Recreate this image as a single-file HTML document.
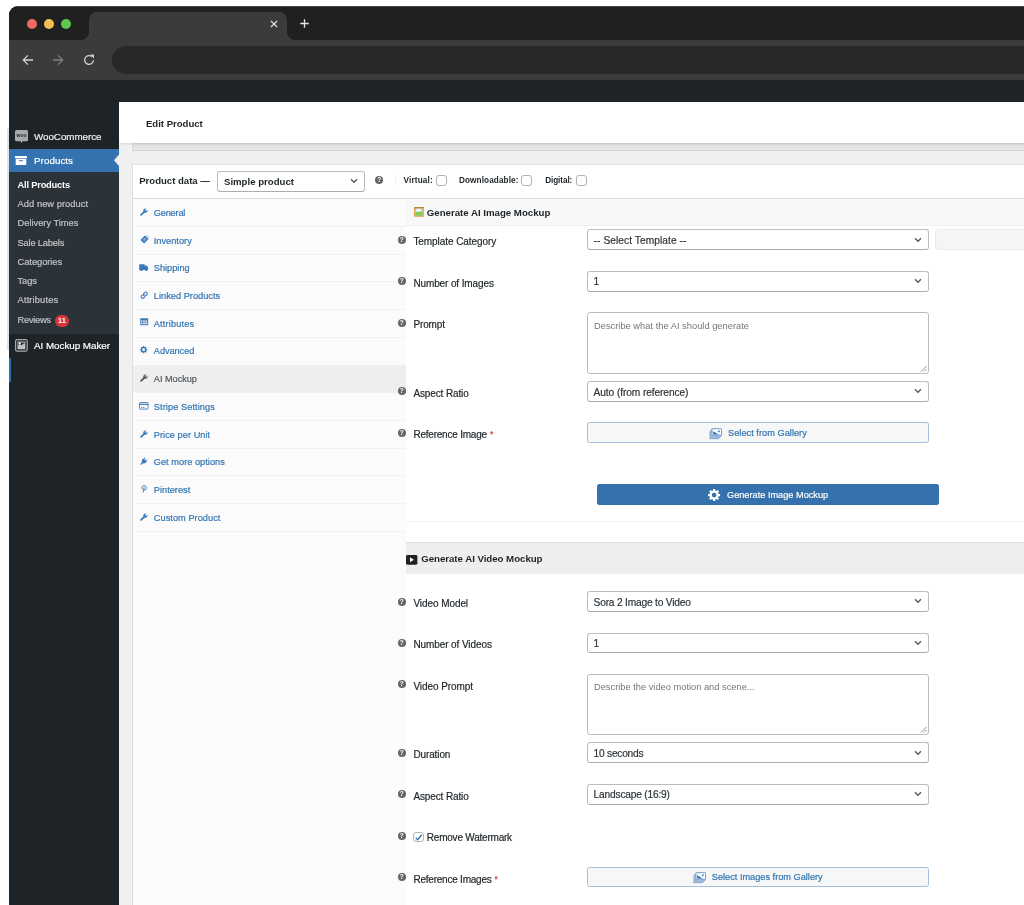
<!DOCTYPE html>
<html lang="en">
<head>
<meta charset="utf-8">
<title>Edit Product</title>
<style>
*{box-sizing:border-box;margin:0;padding:0}
html,body{width:1024px;height:905px;overflow:hidden;background:#fff}
body{font-family:"Liberation Sans",Arial,sans-serif;color:#1d2327;position:relative;font-size:10px}
#win{position:absolute;left:9px;top:6px;width:1100px;height:960px;background:#1d2327;border-top-left-radius:9px;overflow:hidden}
#pg{position:absolute;left:-9px;top:-6px;width:1024px;height:905px;will-change:transform}
#pg>*{position:absolute}
.bx{position:absolute}
.tx{white-space:nowrap;transform:translateY(-50%);line-height:1.2;-webkit-text-stroke:0.18px}
.sel{-webkit-text-stroke:0.18px}
.ic{position:absolute;overflow:visible}
.dot{width:10.6px;height:10.6px;border-radius:50%}
#tab{left:89px;top:12px;width:198px;height:28px;background:#3b3b3c;border-radius:8px 8px 0 0}
#tab:before,#tab:after{content:"";position:absolute;bottom:0;width:8px;height:8px}
#tab:before{left:-8px;background:radial-gradient(circle at 0 0,transparent 7.6px,#3b3b3c 8.2px)}
#tab:after{right:-8px;background:radial-gradient(circle at 100% 0,transparent 7.6px,#3b3b3c 8.2px)}
.mi{color:#f0f0f1;font-size:9.8px}
.sm{color:#c3c4c7;font-size:9.4px}
.sel{border:1px solid #bbbdc0;border-bottom-color:#abadb1;border-radius:3px;background:#fff;font-size:10.2px;padding-left:5.6px;padding-top:1.4px;color:#2c3338;white-space:nowrap}
.chev{position:absolute;right:5.5px;top:50%;margin-top:-3px}
.cb{width:11px;height:11px;border:1px solid #b0b2b6;border-radius:3px;background:#fff}
.hl{font-size:8.4px;font-weight:bold;color:#1d2327}
.tb{color:#3074b2;font-size:9.3px}
.sep{left:133.3px;width:272.9px;height:1px;background:#f1f1f1}
.lab{font-size:10px;color:#1d2327}
.tip{width:8px;height:8px;border-radius:50%;background:#666;color:#fff;font-size:6.5px;font-weight:bold;line-height:8.4px;text-align:center}
.ta{border:1px solid #bbbdc0;border-radius:3px;background:#fff;font-size:9.3px;color:#72777c;padding:6.5px 6px;line-height:12px;white-space:nowrap}
.rz{position:absolute;right:1px;bottom:1px}
.gbtn{border:1px solid #a3bfdd;border-radius:2.5px;background:#f6f7f7}
.pbtn{border-radius:2.5px;background:#3571ad}
.req{color:#d63638}
.hd{font-weight:bold;font-size:9.7px;color:#1d2327}
</style>
</head>
<body>
<div id="win"><div id="pg">
<div style="left:9px;top:6px;width:1015px;height:34px;background:#202021;border-top:1px solid #454546"></div>
<div style="left:9px;top:40px;width:1015px;height:40px;background:#3b3b3c"></div>
<div class="dot" style="left:26.8px;top:18.7px;background:#ed6a5e"></div>
<div class="dot" style="left:43.8px;top:18.7px;background:#f5bf4f"></div>
<div class="dot" style="left:60.8px;top:18.7px;background:#61c554"></div>
<div id="tab"></div>
<svg style="left:269.6px;top:19.6px" width="8" height="8" viewBox="0 0 9 9"><path d="M1 1L8 8M8 1L1 8" stroke="#e3e5e8" stroke-width="1.5" fill="none"/></svg>
<svg style="left:299.5px;top:19.2px" width="9" height="9" viewBox="0 0 10 10"><path d="M5 0.3V9.7M0.3 5H9.7" stroke="#e3e5e8" stroke-width="1.5" fill="none"/></svg>
<svg style="left:22px;top:54px" width="12" height="12" viewBox="0 0 12 12"><path d="M11 6H1.6M5.9 1.4L1.3 6L5.9 10.6" stroke="#d0d2d5" stroke-width="1.3" fill="none"/></svg>
<svg style="left:52px;top:54px" width="12" height="12" viewBox="0 0 12 12"><path d="M1 6H10.4M6.1 1.4L10.7 6L6.1 10.6" stroke="#7d7f82" stroke-width="1.3" fill="none"/></svg>
<svg style="left:83px;top:54px" width="12" height="12" viewBox="0 0 12 12"><path d="M10.4 6.2A4.4 4.4 0 1 1 8.8 2.6" stroke="#d0d2d5" stroke-width="1.3" fill="none"/><path d="M7.2 0.6H11V4.4Z" fill="#d0d2d5"/></svg>
<div style="left:112px;top:46px;width:1000px;height:28px;border-radius:14px;background:#282829"></div>
<div style="left:9px;top:80px;width:110px;height:830px;background:#1d2327"></div>
<svg style="left:14.8px;top:130px" width="13.2" height="13.2" viewBox="0 0 26 26"><path d="M3 0H23A3 3 0 0 1 26 3V19A3 3 0 0 1 23 22H15L12.5 25.5 11 22H3A3 3 0 0 1 0 19V3A3 3 0 0 1 3 0Z" fill="#a7aaad"/><text x="13" y="14.6" font-family="Liberation Sans, sans-serif" font-weight="bold" font-size="10" text-anchor="middle" fill="#1d2327">woo</text></svg>
<div class="tx mi" style="left:34px;top:137.3px;font-size:9.8px;letter-spacing:-0.039px;">WooCommerce</div>
<div style="left:9px;top:148.5px;width:110px;height:23.5px;background:#3572b0"></div>
<svg style="left:113.5px;top:154px" width="5.5" height="12.5" viewBox="0 0 5.5 12.5"><path d="M5.5 0V12.5L0 6.25Z" fill="#f0f0f1"/></svg>
<svg style="left:15.3px;top:155.6px" width="12" height="9.6" viewBox="0 0 24 19" fill="#fff"><rect x="0" y="0" width="24" height="4.2"/><path d="M1.4 5.6H22.6V19H1.4ZM8 8.2V10.4H16V8.2Z" fill-rule="evenodd"/></svg>
<div class="tx mi" style="left:34px;top:160.6px;color:#fff;font-size:9.8px;letter-spacing:0.047px;">Products</div>
<div style="left:9px;top:172px;width:110px;height:162px;background:#2c3338"></div>
<div class="tx sm" style="left:17.6px;top:185.6px;color:#fff;font-size:9.3px;font-weight:bold;-webkit-text-stroke:0;letter-spacing:-0.207px;">All Products</div>
<div class="tx sm" style="left:17.6px;top:205px;font-size:9.3px;letter-spacing:0.050px;">Add new product</div>
<div class="tx sm" style="left:17.6px;top:224.2px;font-size:9.3px;letter-spacing:-0.017px;">Delivery Times</div>
<div class="tx sm" style="left:17.6px;top:243.5px;font-size:9.3px;letter-spacing:-0.185px;">Sale Labels</div>
<div class="tx sm" style="left:17.6px;top:262.7px;font-size:9.3px;letter-spacing:-0.053px;">Categories</div>
<div class="tx sm" style="left:17.6px;top:282px;font-size:9.3px;letter-spacing:-0.132px;">Tags</div>
<div class="tx sm" style="left:17.6px;top:301.2px;font-size:9.3px;letter-spacing:0.135px;">Attributes</div>
<div class="tx sm" style="left:17.6px;top:320.6px;font-size:9.3px;letter-spacing:-0.291px;">Reviews</div>
<div style="left:55px;top:315px;width:14px;height:12.4px;border-radius:6.2px;background:#d63638;color:#fff;font-size:7.4px;font-weight:bold;text-align:center;line-height:12.6px">11</div>
<svg style="left:15px;top:339.3px" width="12.8" height="12.8" viewBox="0 0 26 26"><rect x="1.2" y="1.2" width="23.6" height="23.6" rx="3" fill="none" stroke="#a7aaad" stroke-width="2.4"/><path d="M5 5H21V21H5ZM7 7V13L10.5 9.5 13.5 13 17.5 8.5 19 10V7Z" fill="#c3c4c7" fill-rule="evenodd"/><rect x="8" y="7" width="4" height="3.4" fill="#f0f0f1"/></svg>
<div class="tx mi" style="left:34px;top:345.7px;color:#fff;font-size:9.8px;letter-spacing:-0.018px;">AI Mockup Maker</div>
<div style="left:8.5px;top:358px;width:2px;height:24px;background:#2f6fb0"></div>
<div style="left:118.5px;top:102px;width:910px;height:810px;background:#f0f0f1"></div>
<div style="left:132px;top:143px;width:900px;height:7.5px;background:linear-gradient(#dadbdd,#e8e9ea);border-bottom:1px solid #d0d1d4;border-left:1px solid #d6d7da"></div>
<div style="left:118.5px;top:102px;width:910px;height:41.3px;background:#fff;box-shadow:0 1px 2px rgba(0,0,0,.10)"></div>
<div class="tx " style="left:146px;top:124px;color:#1d2327;font-size:9.6px;font-weight:bold;-webkit-text-stroke:0;letter-spacing:-0.029px;">Edit Product</div>
<div style="left:132.3px;top:163.6px;width:900px;height:760px;background:#fff;border:1px solid #dddee0"></div>
<div style="left:133.3px;top:198px;width:900px;height:1px;background:#dcdcde"></div>
<div class="tx " style="left:139.2px;top:181.2px;font-size:9.6px;font-weight:bold;-webkit-text-stroke:0;letter-spacing:-0.015px;">Product data —</div>
<div class="sel " style="left:217px;top:171px;width:147.5px;height:20.8px;line-height:18.8px;font-size:9.6px;letter-spacing:0.010px;font-weight:bold;color:#1d2327;padding-left:6px;-webkit-text-stroke:0;">Simple product<svg class="chev" width="8" height="6" viewBox="0 0 8 6"><path d="M1 1.2L4 4.3L7 1.2" stroke="#50575e" stroke-width="1.3" fill="none"/></svg></div>
<div class="tip" style="left:375.2px;top:175.6px">?</div>
<div style="left:394.8px;top:175px;width:1px;height:10px;background:#efefef"></div>
<div class="tx hl" style="left:403.6px;top:181.4px;font-size:8.2px;font-weight:bold;-webkit-text-stroke:0;letter-spacing:0.143px;">Virtual:</div>
<div class="cb" style="left:435.6px;top:174.8px"></div>
<div class="tx hl" style="left:459px;top:181.4px;font-size:8.2px;font-weight:bold;-webkit-text-stroke:0;letter-spacing:0.099px;">Downloadable:</div>
<div class="cb" style="left:521px;top:174.8px"></div>
<div class="tx hl" style="left:545.2px;top:181.4px;font-size:8.2px;font-weight:bold;-webkit-text-stroke:0;letter-spacing:-0.084px;">Digital:</div>
<div class="cb" style="left:575.6px;top:174.8px"></div>
<div style="left:133.3px;top:199px;width:272.9px;height:720px;background:#fbfbfb"></div>
<div class="sep" style="top:225.9px"></div>
<svg class="ic" style="left:139.8px;top:207.8px" width="8" height="8" viewBox="0 0 12 12" fill="#3d7ab7"><path d="M9.6 0.9 7.6 2.9 8.1 3.9 9.1 4.4 11.1 2.4C11.6 3.9 11.2 5.4 10.1 6.3 9.2 7.1 8 7.3 6.9 7L2.6 11.3C2.1 11.8 1.2 11.8 0.7 11.3 0.2 10.8 0.2 9.9 0.7 9.4L5 5.1C4.7 4 4.9 2.8 5.7 1.9 6.6 0.8 8.2 0.4 9.6 0.9Z"/></svg>
<div class="tx tb" style="left:153.8px;top:213.8px;font-size:9.2px;letter-spacing:-0.188px;">General</div>
<div class="sep" style="top:253.6px"></div>
<svg class="ic" style="left:139.8px;top:234.5px" width="9" height="9" viewBox="0 0 12 12" fill="#3d7ab7"><path d="M6.6 0.6 11.4 5.4 5.6 11.4 0.6 6.6Z"/><path d="M8.2 0.4l1.2-0.2 2.4 2.4-0.2 1.2z" opacity=".7"/><path d="M3.3 6.3 6.3 3.3 8.8 5.8 5.8 8.8Z" fill="#fafafa" opacity=".35"/></svg>
<div class="tx tb" style="left:153.8px;top:241.5px;font-size:9.2px;letter-spacing:0.020px;">Inventory</div>
<div class="sep" style="top:281.4px"></div>
<svg class="ic" style="left:139.20000000000002px;top:263.9px" width="9.4" height="7.4" viewBox="0 0 19 15" fill="#3d7ab7"><path d="M0.5 0.5H11.5V3H15.5L18.5 7V12H17A2.4 2.4 0 0 1 12.3 12H7.2A2.4 2.4 0 0 1 2.5 12H0.5Z"/><circle cx="4.8" cy="12.3" r="1.9"/><circle cx="14.6" cy="12.3" r="1.9"/></svg>
<div class="tx tb" style="left:153.8px;top:269.2px;font-size:9.2px;letter-spacing:0.013px;">Shipping</div>
<div class="sep" style="top:309.1px"></div>
<svg class="ic" style="left:139.8px;top:291.0px" width="8.4" height="8.4" viewBox="0 0 12 12" fill="none" stroke="#3d7ab7" stroke-width="1.55" stroke-linecap="round"><path d="M5.2 6.8A2.3 2.3 0 0 1 5.2 3.6L6.8 2A2.3 2.3 0 0 1 10 5.2L9 6.2"/><path d="M6.8 5.2A2.3 2.3 0 0 1 6.8 8.4L5.2 10A2.3 2.3 0 0 1 2 6.8L3 5.8"/></svg>
<div class="tx tb" style="left:153.8px;top:297.0px;font-size:9.2px;letter-spacing:0.031px;">Linked Products</div>
<div class="sep" style="top:336.8px"></div>
<svg class="ic" style="left:139.9px;top:318.3px" width="8.4" height="7.4" viewBox="0 0 17 15" fill="#3d7ab7"><path d="M0.5 0.5H16.5V14.5H0.5ZM2.5 5V12.5H14.5V5Z" fill-rule="evenodd"/><rect x="3.8" y="6.4" width="3.4" height="4.8"/><rect x="8.6" y="6.4" width="4.8" height="1.3"/><rect x="8.6" y="8.6" width="4.8" height="1.3"/><rect x="8.6" y="10.6" width="3" height="0.9"/></svg>
<div class="tx tb" style="left:153.8px;top:324.7px;font-size:9.2px;letter-spacing:0.171px;">Attributes</div>
<div class="sep" style="top:364.5px"></div>
<svg class="ic" style="left:139.9px;top:346.2px" width="7.3" height="7.3" viewBox="0 0 12 12" fill="#3d7ab7" fill-rule="evenodd"><path d="M4.80 1.66 L4.98 0.09 L7.02 0.09 L7.20 1.66 L8.22 2.08 L9.46 1.10 L10.90 2.54 L9.92 3.78 L10.34 4.80 L11.91 4.98 L11.91 7.02 L10.34 7.20 L9.92 8.22 L10.90 9.46 L9.46 10.90 L8.22 9.92 L7.20 10.34 L7.02 11.91 L4.98 11.91 L4.80 10.34 L3.78 9.92 L2.54 10.90 L1.10 9.46 L2.08 8.22 L1.66 7.20 L0.09 7.02 L0.09 4.98 L1.66 4.80 L2.08 3.78 L1.10 2.54 L2.54 1.10 L3.78 2.08Z M6 3.7A2.3 2.3 0 1 0 6 8.3A2.3 2.3 0 1 0 6 3.7Z"/></svg>
<div class="tx tb" style="left:153.8px;top:352.4px;font-size:9.2px;letter-spacing:-0.046px;">Advanced</div>
<div style="left:133.3px;top:365.5px;width:272.9px;height:27.7px;background:#eee"></div>
<div class="sep" style="top:392.2px"></div>
<svg class="ic" style="left:139.8px;top:374.1px" width="8" height="8" viewBox="0 0 12 12" fill="#555"><path d="M9.6 0.9 7.6 2.9 8.1 3.9 9.1 4.4 11.1 2.4C11.6 3.9 11.2 5.4 10.1 6.3 9.2 7.1 8 7.3 6.9 7L2.6 11.3C2.1 11.8 1.2 11.8 0.7 11.3 0.2 10.8 0.2 9.9 0.7 9.4L5 5.1C4.7 4 4.9 2.8 5.7 1.9 6.6 0.8 8.2 0.4 9.6 0.9Z"/></svg>
<div class="tx tb" style="left:153.8px;top:380.1px;color:#50575e;font-size:9.2px;letter-spacing:-0.033px;">AI Mockup</div>
<div class="sep" style="top:420.0px"></div>
<svg class="ic" style="left:139.0px;top:402.40000000000003px" width="9.6" height="7.6" viewBox="0 0 19 15" fill="none" stroke="#3d7ab7"><rect x="1" y="1" width="17" height="13" rx="1.5" stroke-width="1.7"/><path d="M1 4.6H18" stroke-width="2.4"/><path d="M3.8 10.8H6.4M8 10.8H11" stroke-width="1.6"/></svg>
<div class="tx tb" style="left:153.8px;top:407.8px;font-size:9.2px;letter-spacing:0.091px;">Stripe Settings</div>
<div class="sep" style="top:447.7px"></div>
<svg class="ic" style="left:139.8px;top:429.6px" width="8" height="8" viewBox="0 0 12 12" fill="#3d7ab7"><path d="M9.6 0.9 7.6 2.9 8.1 3.9 9.1 4.4 11.1 2.4C11.6 3.9 11.2 5.4 10.1 6.3 9.2 7.1 8 7.3 6.9 7L2.6 11.3C2.1 11.8 1.2 11.8 0.7 11.3 0.2 10.8 0.2 9.9 0.7 9.4L5 5.1C4.7 4 4.9 2.8 5.7 1.9 6.6 0.8 8.2 0.4 9.6 0.9Z"/></svg>
<div class="tx tb" style="left:153.8px;top:435.6px;font-size:9.2px;letter-spacing:0.052px;">Price per Unit</div>
<div class="sep" style="top:475.4px"></div>
<svg class="ic" style="left:139.8px;top:457.3px" width="8" height="8" viewBox="0 0 12 12" fill="#3d7ab7"><path d="M7.3 0.6 8.3 1.6 6.6 3.5 8.4 5.3 10.3 3.6 11.3 4.6 9.4 6.5 9.9 7 C8.6 9.3 6.3 10.1 4 9.3L2 11.5 0.6 11.6 0.7 10 2.8 8C2 5.8 2.8 3.5 5 2.1L5.6 2.6Z"/></svg>
<div class="tx tb" style="left:153.8px;top:463.3px;font-size:9.2px;letter-spacing:0.035px;">Get more options</div>
<div class="sep" style="top:503.1px"></div>
<svg class="ic" style="left:140.8px;top:484.8px" width="6.2" height="8" viewBox="0 0 10 13" fill="none" stroke="#3d7ab7" stroke-linecap="round"><path d="M1.6 6.6C0.2 4 1.6 1 5 1 8 1 9.2 3 9 5 8.8 7.2 7.4 8.6 5.8 8.2 4.8 8 4.6 7 4.8 6.2" stroke-width="1.4"/><path d="M5.2 3.8 3.4 11.8" stroke-width="1.5"/></svg>
<div class="tx tb" style="left:153.8px;top:491.0px;font-size:9.2px;letter-spacing:0.024px;">Pinterest</div>
<div class="sep" style="top:530.8px"></div>
<svg class="ic" style="left:139.8px;top:512.7px" width="8" height="8" viewBox="0 0 12 12" fill="#3d7ab7"><path d="M9.6 0.9 7.6 2.9 8.1 3.9 9.1 4.4 11.1 2.4C11.6 3.9 11.2 5.4 10.1 6.3 9.2 7.1 8 7.3 6.9 7L2.6 11.3C2.1 11.8 1.2 11.8 0.7 11.3 0.2 10.8 0.2 9.9 0.7 9.4L5 5.1C4.7 4 4.9 2.8 5.7 1.9 6.6 0.8 8.2 0.4 9.6 0.9Z"/></svg>
<div class="tx tb" style="left:153.8px;top:518.7px;font-size:9.2px;letter-spacing:0.057px;">Custom Product</div>
<div style="left:406.2px;top:199px;width:620px;height:27px;background:#f8f8f8;border-bottom:1px solid #f0f0f0"></div>
<svg style="left:414.3px;top:207.4px" width="9.9" height="9.9" viewBox="0 0 20 20"><rect x="0.3" y="0.3" width="19.4" height="19.4" rx="0.8" fill="#dc9a32"/><rect x="0.3" y="0.3" width="19.4" height="2.4" fill="#b87a26"/><rect x="2.8" y="3" width="14.4" height="14.2" fill="#cfe4f5"/><path d="M2.8 10.8C6 8.8 9 11.4 12 9.8 14 8.8 16 9.2 17.2 10V17.2H2.8Z" fill="#82cf4d"/><ellipse cx="9.4" cy="6.4" rx="4.4" ry="1.9" fill="#fff"/></svg>
<div class="tx hd" style="left:426.8px;top:212.6px;font-size:9.7px;font-weight:bold;-webkit-text-stroke:0;letter-spacing:-0.020px;">Generate AI Image Mockup</div>
<div class="tip" style="left:397.7px;top:236.2px">?</div>
<div class="tx lab" style="left:413.4px;top:242.29999999999998px;font-size:10px;letter-spacing:-0.064px;">Template Category</div>
<div class="tip" style="left:397.7px;top:277.0px">?</div>
<div class="tx lab" style="left:413.4px;top:283.6px;font-size:10px;letter-spacing:-0.117px;">Number of Images</div>
<div class="tip" style="left:397.7px;top:318.7px">?</div>
<div class="tx lab" style="left:413.4px;top:324.5px;font-size:10px;letter-spacing:-0.126px;">Prompt</div>
<div class="tip" style="left:397.7px;top:387.3px">?</div>
<div class="tx lab" style="left:413.4px;top:393.90000000000003px;font-size:10px;letter-spacing:-0.118px;">Aspect Ratio</div>
<div class="tip" style="left:397.7px;top:428.5px">?</div>
<div class="tx lab" style="left:413.4px;top:434.8px;font-size:10px;letter-spacing:-0.215px;">Reference Image</div>
<div class="tx lab" style="left:489.9px;top:434.3px;color:#d63638;font-size:8.4px;">*</div>
<div class="tip" style="left:397.7px;top:597.5px">?</div>
<div class="tx lab" style="left:413.4px;top:603.9px;font-size:10px;letter-spacing:-0.071px;">Video Model</div>
<div class="tip" style="left:397.7px;top:639.0px">?</div>
<div class="tx lab" style="left:413.4px;top:645.3000000000001px;font-size:10px;letter-spacing:-0.091px;">Number of Videos</div>
<div class="tip" style="left:397.7px;top:680.0px">?</div>
<div class="tx lab" style="left:413.4px;top:686.5px;font-size:10px;letter-spacing:-0.073px;">Video Prompt</div>
<div class="tip" style="left:397.7px;top:748.8px">?</div>
<div class="tx lab" style="left:413.4px;top:755.3000000000001px;font-size:10px;letter-spacing:-0.114px;">Duration</div>
<div class="tip" style="left:397.7px;top:790.4px">?</div>
<div class="tx lab" style="left:413.4px;top:796.9px;font-size:10px;letter-spacing:-0.118px;">Aspect Ratio</div>
<div class="tip" style="left:397.7px;top:873.2px">?</div>
<div class="tx lab" style="left:413.4px;top:879.85px;font-size:10px;letter-spacing:-0.221px;">Reference Images</div>
<div class="tx lab" style="left:494.59999999999997px;top:879.35px;color:#d63638;font-size:8.4px;">*</div>
<div class="tip" style="left:397.7px;top:831.6px">?</div>
<div class="cb" style="left:413px;top:831.8px;width:10.6px;height:10.6px"><svg class="bx" style="left:0.8px;top:1px" width="7.5" height="7" viewBox="0 0 15 14"><path d="M1.5 7.5L5.5 11.5L13.5 1.5" stroke="#2f72b2" stroke-width="2.6" fill="none"/></svg></div>
<div class="tx lab" style="left:426.8px;top:838.2px;font-size:10px;letter-spacing:-0.216px;">Remove Watermark</div>
<div class="sel " style="left:587px;top:229.4px;width:341.8px;height:20.8px;line-height:18.8px;font-size:10.2px;letter-spacing:0.063px;">-- Select Template --<svg class="chev" width="8" height="6" viewBox="0 0 8 6"><path d="M1 1.2L4 4.3L7 1.2" stroke="#50575e" stroke-width="1.3" fill="none"/></svg></div>
<div style="left:935px;top:229.4px;width:120px;height:20.8px;background:#f5f5f6;border:1px solid #ececed;border-radius:3px"></div>
<div class="sel " style="left:587px;top:271px;width:341.8px;height:20.6px;line-height:18.6px;font-size:10.2px;">1<svg class="chev" width="8" height="6" viewBox="0 0 8 6"><path d="M1 1.2L4 4.3L7 1.2" stroke="#50575e" stroke-width="1.3" fill="none"/></svg></div>
<div class="ta" style="left:587px;top:312.2px;width:341.8px;height:61.6px;font-size:9.3px;letter-spacing:0.012px;">Describe what the AI should generate<svg class="rz" width="7" height="7" viewBox="0 0 7 7"><path d="M6.5 1L1 6.5M6.5 4L4 6.5" stroke="#777" stroke-width="0.8" fill="none"/></svg></div>
<div class="sel " style="left:587px;top:381.2px;width:341.8px;height:20.6px;line-height:18.6px;font-size:10.2px;letter-spacing:-0.097px;">Auto (from reference)<svg class="chev" width="8" height="6" viewBox="0 0 8 6"><path d="M1 1.2L4 4.3L7 1.2" stroke="#50575e" stroke-width="1.3" fill="none"/></svg></div>
<div class="gbtn" style="left:587px;top:422.2px;width:341.8px;height:20.6px"></div>
<svg class="ic" style="left:709px;top:428px" width="13" height="11" viewBox="0 0 26 22"><path d="M0.6 7.4 5.6 1H25.4V14.6L19.4 21.4H0.6Z" fill="#9dbadb"/><path d="M0.6 21.4H19.4L25.4 14.6" fill="none" stroke="#5f8fc4" stroke-width="1.2"/><rect x="6" y="1.4" width="19" height="13" rx="1.2" fill="#fff" stroke="#6b98c9" stroke-width="1.8"/><path d="M8.2 6.4V13H19.6Z" fill="#2f72b2"/><path d="M19.6 4.6V8.6M17.6 6.6H21.6" stroke="#2f72b2" stroke-width="1.7"/></svg>
<div class="tx " style="left:728px;top:434px;color:#2f72b2;font-size:9.2px;letter-spacing:0.038px;">Select from Gallery</div>
<div class="pbtn" style="left:597.3px;top:483.6px;width:341.7px;height:21.8px"></div>
<svg class="ic" style="left:708px;top:489.4px" width="12.2" height="12.2" viewBox="0 0 12 12" fill="#fff" fill-rule="evenodd"><path d="M4.80 1.66 L4.98 0.09 L7.02 0.09 L7.20 1.66 L8.22 2.08 L9.46 1.10 L10.90 2.54 L9.92 3.78 L10.34 4.80 L11.91 4.98 L11.91 7.02 L10.34 7.20 L9.92 8.22 L10.90 9.46 L9.46 10.90 L8.22 9.92 L7.20 10.34 L7.02 11.91 L4.98 11.91 L4.80 10.34 L3.78 9.92 L2.54 10.90 L1.10 9.46 L2.08 8.22 L1.66 7.20 L0.09 7.02 L0.09 4.98 L1.66 4.80 L2.08 3.78 L1.10 2.54 L2.54 1.10 L3.78 2.08Z M6 3.7A2.3 2.3 0 1 0 6 8.3A2.3 2.3 0 1 0 6 3.7Z"/></svg>
<div class="tx " style="left:727px;top:495.7px;color:#fff;font-size:9.2px;letter-spacing:0.002px;">Generate Image Mockup</div>
<div style="left:406.2px;top:521px;width:620px;height:1px;background:#f0f0f0"></div>
<div style="left:406.2px;top:542.2px;width:620px;height:31.6px;background:#eeeeef;border-top:1px solid #dedee0"></div>
<svg style="left:406.4px;top:555px" width="11.4" height="9.7" viewBox="0 0 23 19.4"><rect x="0" y="0" width="23" height="19.4" rx="3" fill="#1d2327"/><path d="M8 4.6L16 9.7L8 14.8Z" fill="#fff"/></svg>
<div class="tx hd" style="left:421.2px;top:558.8px;font-size:9.7px;font-weight:bold;-webkit-text-stroke:0;letter-spacing:-0.037px;">Generate AI Video Mockup</div>
<div class="sel " style="left:587px;top:591.2px;width:341.8px;height:20.6px;line-height:18.6px;font-size:10.2px;letter-spacing:-0.191px;">Sora 2 Image to Video<svg class="chev" width="8" height="6" viewBox="0 0 8 6"><path d="M1 1.2L4 4.3L7 1.2" stroke="#50575e" stroke-width="1.3" fill="none"/></svg></div>
<div class="sel " style="left:587px;top:632.5px;width:341.8px;height:20.5px;line-height:18.5px;font-size:10.2px;">1<svg class="chev" width="8" height="6" viewBox="0 0 8 6"><path d="M1 1.2L4 4.3L7 1.2" stroke="#50575e" stroke-width="1.3" fill="none"/></svg></div>
<div class="ta" style="left:587px;top:673.7px;width:341.8px;height:61.4px;font-size:9.3px;letter-spacing:-0.005px;">Describe the video motion and scene...<svg class="rz" width="7" height="7" viewBox="0 0 7 7"><path d="M6.5 1L1 6.5M6.5 4L4 6.5" stroke="#777" stroke-width="0.8" fill="none"/></svg></div>
<div class="sel " style="left:587px;top:742.4px;width:341.8px;height:20.4px;line-height:18.4px;font-size:10.2px;letter-spacing:-0.241px;">10 seconds<svg class="chev" width="8" height="6" viewBox="0 0 8 6"><path d="M1 1.2L4 4.3L7 1.2" stroke="#50575e" stroke-width="1.3" fill="none"/></svg></div>
<div class="sel " style="left:587px;top:784px;width:341.8px;height:20.5px;line-height:18.5px;font-size:10.2px;letter-spacing:-0.193px;">Landscape (16:9)<svg class="chev" width="8" height="6" viewBox="0 0 8 6"><path d="M1 1.2L4 4.3L7 1.2" stroke="#50575e" stroke-width="1.3" fill="none"/></svg></div>
<div class="gbtn" style="left:587px;top:866.5px;width:341.8px;height:20.7px"></div>
<svg class="ic" style="left:693.4px;top:872.3px" width="13" height="11" viewBox="0 0 26 22"><path d="M0.6 7.4 5.6 1H25.4V14.6L19.4 21.4H0.6Z" fill="#9dbadb"/><path d="M0.6 21.4H19.4L25.4 14.6" fill="none" stroke="#5f8fc4" stroke-width="1.2"/><rect x="6" y="1.4" width="19" height="13" rx="1.2" fill="#fff" stroke="#6b98c9" stroke-width="1.8"/><path d="M8.2 6.4V13H19.6Z" fill="#2f72b2"/><path d="M19.6 4.6V8.6M17.6 6.6H21.6" stroke="#2f72b2" stroke-width="1.7"/></svg>
<div class="tx " style="left:711.8px;top:878.3px;color:#2f72b2;font-size:9.2px;letter-spacing:0.002px;">Select Images from Gallery</div>
</div></div>
<div style="position:absolute;left:7px;top:128px;width:2px;height:222px;background:#e4e4e4"></div>
</body>
</html>
